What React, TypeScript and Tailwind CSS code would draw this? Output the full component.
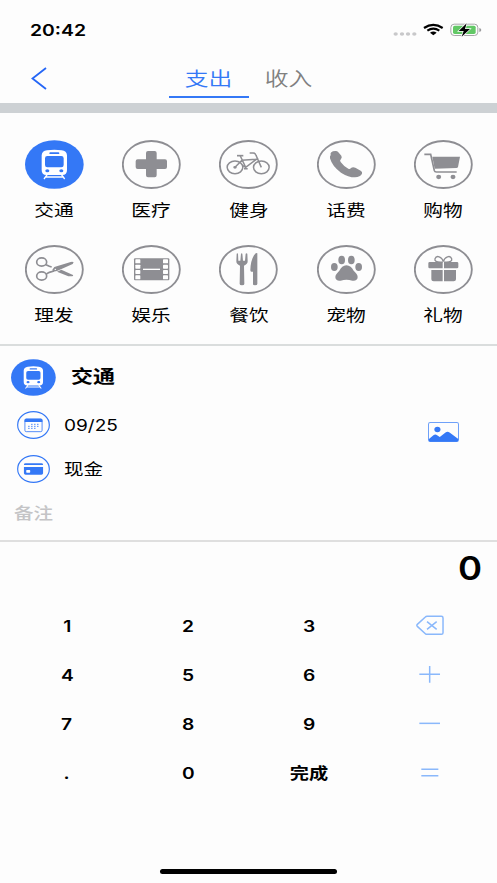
import { useState } from 'react';
import type { ReactNode } from 'react';

const fontStack = "font-['Inter','Noto_Sans_CJK_SC',sans-serif]";

function TrainGlyph() {
  return (
    <>
      <path
        fill="#fff"
        fillRule="evenodd"
        d="M66 31Q88 27 110 31Q125 33 126 46V90Q126 105 112 105H64Q50 105 50 90V46Q51 33 66 31ZM67 48Q60 48 60 55V75Q60 82 67 82H109Q116 82 116 75V55Q116 48 109 48ZM76 37Q73 37 73 39.500T76 42H100Q103 42 103 39.500T100 37Z"
      />
      <ellipse cx="67" cy="92" rx="6" ry="4.500" fill="#3478f6" />
      <ellipse cx="109" cy="92" rx="6" ry="4.500" fill="#3478f6" />
      <path d="M67 103L57 117M109 103L119 117M62 111H114" stroke="#fff" strokeWidth="4" fill="none" />
    </>
  );
}

const glyphs: Record<string, ReactNode> = {
  medical: (
    <path d="M78 33H98Q104 33 104 39V58H129Q135 58 135 64V81Q135 87 129 87H104V106Q104 112 98 112H78Q72 112 72 106V87H47Q41 87 41 81V64Q41 58 47 58H72V39Q72 33 78 33Z" />
  ),
  bike: (
    <g fill="none" stroke="currentColor" strokeWidth="4.500">
      <ellipse cx="48" cy="82" rx="23.500" ry="19" />
      <ellipse cx="127" cy="82" rx="23.500" ry="19" />
      <path d="M92 39H103Q109 39 111 46L127 82M64 48L80 82L112 58L69 61L48 82M80 82L71 77M75 86H86" />
      <path d="M54 47H73" strokeWidth="5" />
      <ellipse cx="48" cy="82" rx="3" ry="2" />
    </g>
  ),
  phone: (
    <path d="M41 45Q38 34 55 33Q60 32 64 37L73 47Q76 52 72 57Q67 61 71 66Q81 80 94 86Q99 88 102 84Q107 80 115 83L131 92Q137 95 135 101Q130 111 114 112Q94 112 72 98Q46 80 39 55Q38 49 41 45Z" />
  ),
  cart: (
    <>
      <path d="M55 50H138L132 81Q131 84 127 84L62 86Z" />
      <path d="M31 43H50L61 92Q62 96 67 96H128" fill="none" stroke="currentColor" strokeWidth="5" />
      <ellipse cx="74" cy="111" rx="7.500" ry="6.500" />
      <ellipse cx="117" cy="111" rx="7.500" ry="6.500" />
    </>
  ),
  scissors: (
    <>
      <g fill="none" stroke="currentColor" strokeWidth="5">
        <ellipse cx="50" cy="51" rx="15" ry="12.500" />
        <ellipse cx="50" cy="93" rx="15" ry="12.500" />
        <path d="M63 59L73 64L80 66M64 87L73 82L87 78" />
      </g>
      <path d="M82 74L88 66L137 51Q143 49 146 52L143 57L96 78L84 80Z" />
      <path d="M96 80L109 74L144 90Q146 93 142 94L130 94Z" />
      <ellipse cx="91" cy="73" rx="2.500" ry="2" fill="#fff" />
    </>
  ),
  film: (
    <>
      <rect x="36" y="40" width="106" height="66" rx="3" />
      <g fill="#fff">
        <rect x="40" y="43" width="15" height="12" rx="2" />
        <rect x="40" y="59" width="15" height="12" rx="2" />
        <rect x="40" y="75" width="15" height="12" rx="2" />
        <rect x="40" y="91" width="15" height="12" rx="2" />
        <rect x="123" y="43" width="15" height="12" rx="2" />
        <rect x="123" y="59" width="15" height="12" rx="2" />
        <rect x="123" y="75" width="15" height="12" rx="2" />
        <rect x="123" y="91" width="15" height="12" rx="2" />
        <rect x="63" y="71" width="51" height="4" />
      </g>
    </>
  ),
  meal: (
    <>
      <path d="M53 26Q55 23 57 26L58 47H64L66 26Q68 23 70 26L72 47H78L80 26Q82 23 85 26L86 49Q86 58 75 62L76 117Q76 121 69 121T62 117L63 62Q52 58 52 49Z" />
      <path d="M115 27V117Q115 121 108 121T102 117V80H97Q94 80 94 75Q95 47 105 31Q111 22 115 25Z" />
    </>
  ),
  paw: (
    <>
      <ellipse cx="52" cy="66" rx="10" ry="12" />
      <ellipse cx="74" cy="45" rx="10" ry="13" />
      <ellipse cx="103" cy="45" rx="10" ry="13" />
      <ellipse cx="125" cy="66" rx="10" ry="12" />
      <path d="M88 61C98 61 105 68 110 77C116 84 122 88 122 96C122 105 114 109 106 107Q88 101 71 107C63 109 55 105 55 96C55 88 62 84 67 77C72 68 79 61 88 61Z" />
    </>
  ),
  gift: (
    <>
      <path d="M47 51H86V70H47Q43 70 43 66V55Q43 51 47 51ZM90 51H129Q133 51 133 55V66Q133 70 129 70H90ZM52 75H86V109H59Q52 109 52 103ZM90 75H126V103Q126 109 119 109H90Z" />
      <path
        d="M86 51C66 53 61 47 63 41C67 30 84 34 88 50C92 34 109 30 113 41C115 47 110 53 90 51"
        fill="none"
        stroke="currentColor"
        strokeWidth="4"
      />
    </>
  ),
};

const categories = [
  { id: 'train', label: '交通' },
  { id: 'medical', label: '医疗' },
  { id: 'bike', label: '健身' },
  { id: 'phone', label: '话费' },
  { id: 'cart', label: '购物' },
  { id: 'scissors', label: '理发' },
  { id: 'film', label: '娱乐' },
  { id: 'meal', label: '餐饮' },
  { id: 'paw', label: '宠物' },
  { id: 'gift', label: '礼物' },
];

const keys = ['1', '2', '3', 'del', '4', '5', '6', 'plus', '7', '8', '9', 'minus', '.', '0', '完成', 'equals'];

const operators: Record<string, ReactNode> = {
  del: (
    <path d="M33 4H76Q81 4 81 9V53Q81 58 76 58H33Q30 58 28 56L4 34Q1 31 4 28L28 6Q30 4 33 4ZM33 20L62 43M62 20L33 43" />
  ),
  plus: <path d="M10 31H72M41 6V56" />,
  minus: <path d="M10 31H72" />,
  equals: <path d="M16 21.500H67M16 41H67" />,
};

function CategoryIcon({ id, className }: { id: string; className: string }) {
  const filled = id === 'train';
  return (
    <svg viewBox="0 0 177 147" preserveAspectRatio="none" className={className} fill="currentColor">
      {filled ? (
        <>
          <ellipse cx="88" cy="73.500" rx="88" ry="73" fill="#3478f6" />
          <TrainGlyph />
        </>
      ) : (
        <>
          <ellipse cx="88" cy="73.500" rx="85.500" ry="70.500" fill="none" stroke="currentColor" strokeWidth="5.500" />
          {glyphs[id]}
        </>
      )}
    </svg>
  );
}

function StatusBar() {
  return (
    <div className="flex h-[60px] items-center justify-between pl-[30px] pr-[14px]">
      <span className="origin-left scale-x-[1.21] text-base font-semibold">20:42</span>
      <svg viewBox="440 66 270 48" className="h-4 w-[90px]">
        <g fill="#c8c8ca">
          <ellipse cx="448" cy="102" rx="6.500" ry="5.500" />
          <ellipse cx="467" cy="102" rx="6.500" ry="5.500" />
          <ellipse cx="485" cy="102" rx="6.500" ry="5.500" />
          <ellipse cx="504" cy="102" rx="6.500" ry="5.500" />
        </g>
        <g fill="none" stroke="#000" strokeWidth="6.500">
          <path d="M533 84Q561 65 589 84" />
          <path d="M543 92Q561 80 579 92" />
        </g>
        <path d="M551 98Q561 91 571 98L561 106Z" />
        <rect x="613.500" y="72.500" width="81" height="34" rx="10" fill="none" stroke="#a6a6a8" strokeWidth="3" />
        <rect x="620" y="77" width="68" height="25" rx="5" fill="#62c866" />
        <path d="M699 84Q705 86 705 90T699 96Z" fill="#9b9b9d" />
        <path d="M661 70L637 93H652L646 110L671 87H656Z" stroke="#fdfdfd" strokeWidth="4" paintOrder="stroke" />
      </svg>
    </div>
  );
}

function DetailIcon({ children }: { children: ReactNode }) {
  return (
    <svg viewBox="0 0 100 84" preserveAspectRatio="none" className="h-7 w-[33px]">
      <ellipse cx="50" cy="42" rx="48" ry="40" fill="none" stroke="#3478f6" strokeWidth="3.500" />
      {children}
    </svg>
  );
}

export default function App() {
  const [selected, setSelected] = useState('交通');

  return (
    <div className={`flex h-[883px] w-[497px] flex-col overflow-hidden bg-[#fdfdfd] text-black ${fontStack}`}>
      <StatusBar />

      {/* Header tabs */}
      <div className="grid h-[42.500px] shrink-0 grid-cols-[169px_80px_80px_1fr] text-center text-[19.5px]">
        <button className="flex items-start pl-[31px] pt-[7px]">
          <svg viewBox="0 0 16 23" className="h-[23px] w-4" fill="none" stroke="#2566f6" strokeWidth="1.8">
            <path d="M15 1L1.500 11.500L15 22" />
          </svg>
        </button>
        <button className="flex h-[38px] items-center justify-center border-b-2 border-[#3478f6] pt-1 text-[#3478f6]">
          <span className="scale-x-[1.22] font-[350]">支出</span>
        </button>
        <button className="flex h-[38px] items-center justify-center border-b-2 border-transparent pt-1 text-[#808080]">
          <span className="scale-x-[1.22] font-[350]">收入</span>
        </button>
      </div>
      <div className="h-[10.500px] shrink-0 bg-[#cdd1d4]" />

      {/* Categories */}
      <div className="grid h-[233px] shrink-0 grid-cols-5 auto-rows-[104.5px] border-b-2 border-[#dadddd] pl-[5.500px] pr-[5px] pt-[27px]">
        {categories.map(c => (
          <button key={c.id} onClick={() => setSelected(c.label)} className="flex flex-col items-center text-[#8e8e93]">
            <CategoryIcon id={c.id} className="h-[49px] w-[59px] shrink-0" />
            <span className="mt-[9px] scale-x-[1.23] text-base leading-6 text-black">{c.label}</span>
          </button>
        ))}
      </div>

      {/* Entry details */}
      <div className="flex h-[196px] shrink-0 border-b-2 border-[#dfdfdf]">
        <div className="flex flex-1 flex-col">
          <div className="mt-3 flex h-[38px] items-center pl-[11px]">
            <CategoryIcon id="train" className="h-[37px] w-[45px]" />
            <span className="ml-[15px] origin-left scale-x-[1.22] text-lg font-bold">{selected}</span>
          </div>
          <div className="mt-[15px] flex h-7 items-center pl-[17px]">
            <DetailIcon>
              <rect x="24" y="24" width="52" height="38" rx="4" fill="none" stroke="#3478f6" strokeWidth="2.500" />
              <path d="M23 33V27Q23 23 28 23H72Q77 23 77 27V33Z" fill="#3478f6" />
              <path
                d="M43 40H70M34 46H70M34 52H61"
                stroke="#3478f6"
                strokeWidth="3"
                strokeDasharray="4 5"
              />
            </DetailIcon>
            <span className="ml-3.5 origin-left scale-x-[1.19] text-base">09/25</span>
          </div>
          <div className="mt-4 flex h-7 items-center pl-[17px]">
            <DetailIcon>
              <path d="M21 29Q21 25 26 25H74Q79 25 79 29V30H21ZM21 36H79V55Q79 59 74 59H26Q21 59 21 55Z" fill="#3478f6" />
              <rect x="28" y="45" width="12" height="8" rx="2" fill="#fff" />
            </DetailIcon>
            <span className="ml-3.5 origin-left scale-x-[1.22] text-base">现金</span>
          </div>
          <div className="mt-[18px] pl-3.5 text-base leading-6 text-[#c4c4c6]">
            <span className="inline-block origin-left scale-x-[1.22] font-medium">备注</span>
          </div>
        </div>
        <div className="pr-[38px] pt-[76px]">
          <svg viewBox="0 0 92 59" preserveAspectRatio="none" className="h-5 w-[31px]" fill="#3478f6">
            <rect x="1.500" y="1.500" width="89" height="56" rx="5" fill="none" stroke="#6fa1f9" strokeWidth="3" />
            <ellipse cx="28" cy="22" rx="9" ry="8" />
            <path d="M2 51L16 39Q22 35 27 39L35 44L52 31Q58 26 64 31L90 50V53Q90 58 85 58H7Q2 58 2 53Z" />
          </svg>
        </div>
      </div>

      {/* Amount */}
      <div className="flex h-[59px] shrink-0 justify-end pr-[15px] pt-[6px] text-[32px] leading-[42px] font-semibold">
        <span className="origin-right scale-x-[1.14]">0</span>
      </div>

      <div className="grid grid-cols-4 auto-rows-[49px] px-[6.5px] text-base font-semibold">
        {keys.map(k => (
          <button key={k} className="flex items-center justify-center">
            {operators[k] ? (
              <svg viewBox="0 0 83 62" className="h-[20.7px] w-[27.7px]" fill="none" stroke="#8ab8fb" strokeWidth="4.500">
                {operators[k]}
              </svg>
            ) : (
              <span className="scale-x-[1.2]">{k}</span>
            )}
          </button>
        ))}
      </div>

      <div className="mx-auto mb-[9px] mt-auto h-[5px] w-[177px] rounded-full bg-black" />
    </div>
  );
}
